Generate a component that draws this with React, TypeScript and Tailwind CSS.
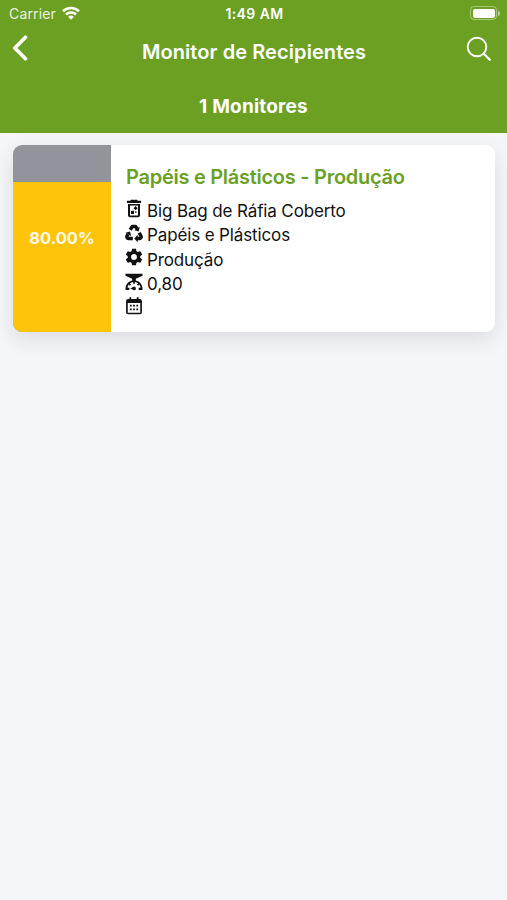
import type { ReactNode } from 'react';

interface IconProps {
  children: ReactNode;
}

function Icon({ children }: IconProps) {
  return (
    <svg viewBox="0 0 24 24" fill="currentColor" className="mt-[1.5px] size-5 shrink-0" aria-hidden="true">
      {children}
    </svg>
  );
}

function BinIcon() {
  return (
    <Icon>
      <path d="M8.500 1h7l1 1.200H20.500v2.600H3.500V2.200h4zM4.800 6h14.400V19.500a2.500 2.500 0 0 1-2.500 2.500H7.300a2.500 2.500 0 0 1-2.500-2.500zM7.200 7.800v12h9.600v-12z" fillRule="evenodd" />
      <path d="M14 8.400l2.400 2.600-2.400 2.600-2.700-2.600zM8.300 14.200h3.700v3.700H8.300zM13.300 14.800h1.700v1.700h-1.700z" />
    </Icon>
  );
}

// three chasing arrows
function RecycleIcon() {
  return (
    <Icon>
      <g fill="none" stroke="currentColor" strokeWidth="4.200" strokeLinejoin="round">
        <path d="M7.500 8.200l1.900-3.300q.4-.6 1-.6h3q.6 0 1 .6l1.300 2.200" />
        <path d="M18.200 11.700l2.100 3.700c.9 1.600-.1 3.200-1.700 3.200H15.500" />
        <path d="M10.600 18.600H5.400c-1.600 0-2.600-1.600-1.700-3.200l1.200-2.100" />
      </g>
      <path d="M18.900 4.600l-1.300 5.600-5.200-1.600zM16.500 14v9l-4.200-4.500zM1.700 11.800l5.500-1.500 1.500 5.400z" />
    </Icon>
  );
}

function CogIcon() {
  return (
    <Icon>
      <path d="M12,15.5A3.5,3.5 0 0,1 8.5,12A3.5,3.5 0 0,1 12,8.5A3.5,3.5 0 0,1 15.5,12A3.5,3.5 0 0,1 12,15.5M19.43,12.97C19.47,12.65 19.5,12.33 19.5,12C19.5,11.67 19.47,11.34 19.43,11L21.54,9.37C21.73,9.22 21.78,8.95 21.66,8.73L19.66,5.27C19.54,5.05 19.27,4.96 19.05,5.05L16.56,6.05C16.04,5.66 15.5,5.32 14.87,5.07L14.5,2.42C14.46,2.18 14.25,2 14,2H10C9.75,2 9.54,2.18 9.5,2.42L9.13,5.07C8.5,5.32 7.96,5.66 7.44,6.05L4.95,5.05C4.73,4.96 4.46,5.05 4.34,5.27L2.34,8.73C2.21,8.95 2.27,9.22 2.46,9.37L4.57,11C4.53,11.34 4.5,11.67 4.5,12C4.5,12.33 4.53,12.65 4.57,12.97L2.46,14.63C2.27,14.78 2.21,15.05 2.34,15.27L4.34,18.73C4.46,18.95 4.73,19.03 4.95,18.95L7.44,17.94C7.96,18.34 8.5,18.68 9.13,18.93L9.5,21.58C9.54,21.82 9.75,22 10,22H14C14.25,22 14.46,21.82 14.5,21.58L14.87,18.93C15.5,18.67 16.04,18.34 16.56,17.94L19.05,18.95C19.27,19.03 19.54,18.95 19.66,18.73L21.66,15.27C21.78,15.05 21.73,14.78 21.54,14.63L19.43,12.97Z" />
    </Icon>
  );
}

function ScaleIcon() {
  return (
    <Icon>
      <path d="M1.800 2h20.400v2.600L14.200 8v2.200C18.600 11.100 22.200 15.200 22.200 20v1.500h-4.600V19H19.800C19.600 17.540 19.180 16.210 18.320 15.100L16.950 16.470 15.540 15.060 16.910 13.680C15.800 12.820 14.460 12.240 13 12.060V14h-2v-1.940C9.540 12.240 8.200 12.820 7.090 13.680L8.460 15.060 7.050 16.470 5.680 15.100C4.820 16.210 4.400 17.540 4.200 19H6.400v2.500H1.800V20C1.800 15.200 5.400 11.100 9.800 10.200V8L1.800 4.600z" />
      <path d="M12,17.5A2.2,2.2 0 0,1 12,22L7.5,19.8z" />
    </Icon>
  );
}

function CalendarIcon() {
  return (
    <Icon>
      <path d="M6.500 1.500h2.200V3.500h6.600V1.500h2.200V3.500H19A2.500 2.500 0 0 1 21.500 6V19.500A2.500 2.500 0 0 1 19 22H5A2.500 2.500 0 0 1 2.500 19.500V6A2.500 2.500 0 0 1 5 3.500H6.500zM4.500 8.500V20h15V8.500z" fillRule="evenodd" />
      <path d="M7 10.500h2.200v2.200H7zM10.900 10.500h2.200v2.200h-2.200zM14.800 10.500H17v2.200h-2.200zM7 15h2.200v2.200H7zM10.900 15h2.200v2.200h-2.200zM14.800 15H17v2.200h-2.200z" />
    </Icon>
  );
}

function StatusBar() {
  return (
    <div className="grid h-7 grid-cols-3 items-center pl-[9px] pr-[7px]">
      <div className="flex items-center gap-1.5">
        <span className="text-[14px] leading-[26px] tracking-[0.15px] text-white/85">Carrier</span>
        <svg viewBox="0 0 18 14" className="mb-[2px] h-[14px] w-[18px]" fill="none" stroke="currentColor" strokeWidth="2.6">
          <path d="M1 5.200a11.500 11.500 0 0 1 16 0M4 8.500a7.200 7.200 0 0 1 10 0" />
          <path d="M9 13.800l-2.900-3a4.200 4.200 0 0 1 5.800 0z" fill="currentColor" stroke="none" />
        </svg>
      </div>
      <span className="mb-[2px] whitespace-nowrap text-center text-[14px] font-semibold tracking-[0.4px]">1:49 AM</span>
      <div className="mb-[2px] flex items-center justify-end gap-px">
        <div className="h-[14px] w-[27px] rounded-[4px] border border-white/40 p-[1.5px]">
          <div className="h-full rounded-[2px] bg-white" />
        </div>
        <div className="h-[5px] w-[2px] rounded-r-full bg-white/50" />
      </div>
    </div>
  );
}

function Header() {
  return (
    <header className="h-[133px] bg-[#6ba023] text-white">
      <StatusBar />
      <div className="flex h-12 items-center justify-between pl-[12px] pr-[15px]">
        <button aria-label="Voltar" className="mb-[8px] w-[30px]">
          <svg viewBox="0 0 16 26" className="h-[26px] w-4" fill="none" stroke="currentColor" strokeWidth="3.6" strokeLinecap="round" strokeLinejoin="round">
            <path d="M13.500 2.200L2.800 13l10.700 10.800" />
          </svg>
        </button>
        <h1 className="text-[20px] font-semibold tracking-[0.08px]">Monitor de Recipientes</h1>
        <button aria-label="Buscar" className="mb-[6px] w-[26px]">
          <svg viewBox="0 0 26 26" className="size-[26px]" fill="none" stroke="currentColor" strokeWidth="1.9" strokeLinecap="round">
            <circle cx="11" cy="11" r="9.300" />
            <path d="M17.800 17.800l6 6" strokeWidth="2.300" />
          </svg>
        </button>
      </div>
      <p className="mt-[16px] text-center text-[19px] font-bold leading-[29px] tracking-[0.2px]">1 Monitores</p>
    </header>
  );
}

interface Monitor {
  title: string;
  level: number;
  container: string;
  material: string;
  area: string;
  weight: string;
}

function MonitorCard({ monitor }: { monitor: Monitor }) {
  const rows = [
    { icon: <BinIcon />, text: monitor.container },
    { icon: <RecycleIcon />, text: monitor.material },
    { icon: <CogIcon />, text: monitor.area },
    { icon: <ScaleIcon />, text: monitor.weight },
    { icon: <CalendarIcon />, text: '' },
  ];

  return (
    <article className="flex h-[187px] rounded-[9px] bg-white shadow-[0_7px_22px_rgba(0,0,0,0.11)]">
      <div className="relative flex w-[98px] items-center justify-center overflow-hidden rounded-l-[9px] bg-[#92939b]">
        <div className="absolute inset-x-0 bottom-0 bg-[#fec40b]" style={{ height: `${monitor.level}%` }} />
        <span className="relative text-[16.500px] font-bold text-[#fffbe8]">{monitor.level.toFixed(2)}%</span>
      </div>
      <div className="pl-[13px] pt-[19px]">
        <h2 className="pl-[2px] text-[20px] font-semibold leading-[27px] tracking-[-0.27px] text-[#6ba023]">
          {monitor.title}
        </h2>
        <ul className="mt-[6px]">
          {rows.map((row, i) => (
            <li key={i} className="flex h-[24.4px] gap-[3px] text-[17px] leading-[29.500px] tracking-[-0.13px] text-[#111]">
              {row.icon}
              <span>{row.text}</span>
            </li>
          ))}
        </ul>
      </div>
    </article>
  );
}

export default function App() {
  const monitor: Monitor = {
    title: 'Papéis e Plásticos - Produção',
    level: 80,
    container: 'Big Bag de Ráfia Coberto',
    material: 'Papéis e Plásticos',
    area: 'Produção',
    weight: '0,80',
  };

  return (
    <div className="min-h-screen bg-[#f4f6fa] font-[Inter,'Liberation_Sans',sans-serif]">
      <Header />
      <main className="pl-[13px] pr-3 pt-3">
        <MonitorCard monitor={monitor} />
      </main>
    </div>
  );
}
